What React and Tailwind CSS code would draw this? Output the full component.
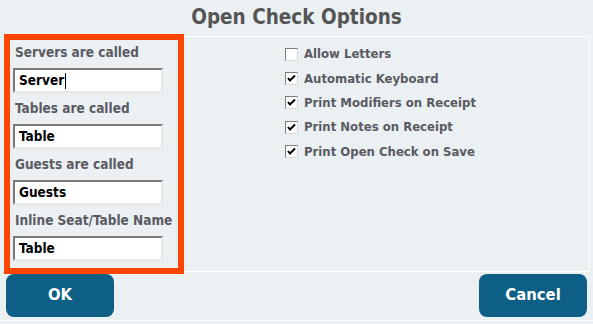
import React from 'react';

const font = { fontFamily: '"DejaVu Sans Condensed", "DejaVu Sans", Tahoma, sans-serif' };

const fields = [
  { label: 'Servers are called', value: 'Server', caret: true },
  { label: 'Tables are called', value: 'Table' },
  { label: 'Guests are called', value: 'Guests' },
  { label: 'Inline Seat/Table Name', value: 'Table' },
];

const options = [
  { label: 'Allow Letters', checked: false },
  { label: 'Automatic Keyboard', checked: true },
  { label: 'Print Modifiers on Receipt', checked: true },
  { label: 'Print Notes on Receipt', checked: true },
  { label: 'Print Open Check on Save', checked: true },
];

const Checkbox = ({ checked }) => (
  <span className="w-[13px] h-[13px] bg-white border border-t-[#7d7d7d] border-l-[#7d7d7d] border-b-[#d8d8d8] border-r-[#d8d8d8] flex items-center justify-center">
    {checked && (
      <svg width="9" height="9" viewBox="0 0 9 9">
        <path d="M1 4l2 2.5L8 1.5" fill="none" stroke="#000" strokeWidth="2" />
      </svg>
    )}
  </span>
);

export default function App() {
  return (
    <div className="w-[593px] h-[324px] bg-[#ebf0f3] flex flex-col overflow-hidden" style={font}>
      <div className="h-[36px] flex items-center justify-center text-[20.5px] font-bold text-[#555] pb-[2px]">
        Open Check Options
      </div>

      <div className="ml-[4px] w-[586px] h-[236px] border border-white flex">
        <div className="-mt-[3px] -ml-[1px] w-[180px] h-[240px] shrink-0 border-[6px] border-[#ff4500] flex flex-col pl-[3px]">
          {fields.map((f) => (
            <div key={f.label} className="flex flex-col">
              <div className="h-[24px] flex items-center pl-[2px] text-[13.5px] font-bold text-[#5a5a62] mb-[4px]">{f.label}</div>
              <div className="w-[150px] h-[25px] bg-white border-2 border-t-[#7a7a7a] border-l-[#7a7a7a] border-b-[#e8e8e8] border-r-[#e8e8e8] flex items-center pl-[4px] text-[13.5px] font-bold text-black mb-[3px]">
                {f.value}
                {f.caret && <span className="w-[1px] h-[16px] bg-black ml-[1px]" />}
              </div>
            </div>
          ))}
        </div>

        <div className="ml-[101px] mt-[5px] flex flex-col">
          {options.map((o) => (
            <div key={o.label} className="flex items-center gap-[6px] h-[24.3px]">
              <Checkbox checked={o.checked} />
              <span className="text-[13px] font-bold text-[#5a5a62]">{o.label}</span>
            </div>
          ))}
        </div>
      </div>

      <div className="flex justify-between px-[6px] mt-[2px]">
        <button className="w-[108px] h-[43px] rounded-[8px] bg-[#0d5f86] text-white text-[16.5px] font-bold">OK</button>
        <button className="w-[108px] h-[43px] rounded-[8px] bg-[#0d5f86] text-white text-[16.5px] font-bold">Cancel</button>
      </div>
      <div className="mt-[3px] h-[1px] bg-[#f7f9fa]" />
    </div>
  );
}
